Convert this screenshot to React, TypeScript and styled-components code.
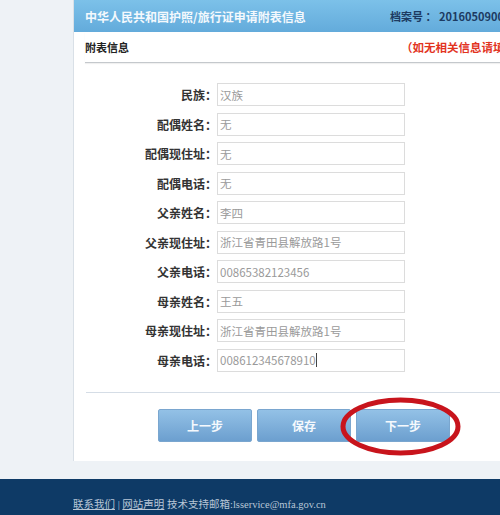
import React from 'react'
import styled, { createGlobalStyle } from 'styled-components'

const GlobalStyle = createGlobalStyle`
  html, body {
    margin: 0;
    padding: 0;
    overflow: hidden;
    background: #eef2f6;
  }
  body {
    font-family: "Noto Sans CJK SC", "Noto Sans", sans-serif;
  }
`

const fields = [
  { label: '民族', value: '汉族' },
  { label: '配偶姓名', value: '无' },
  { label: '配偶现住址', value: '无' },
  { label: '配偶电话', value: '无' },
  { label: '父亲姓名', value: '李四' },
  { label: '父亲现住址', value: '浙江省青田县解放路1号' },
  { label: '父亲电话', value: '00865382123456' },
  { label: '母亲姓名', value: '王五' },
  { label: '母亲现住址', value: '浙江省青田县解放路1号' },
  { label: '母亲电话', value: '008612345678910', caret: true }
]

export default function App() {
  return (
    <Page>
      <GlobalStyle />
      <Main>
        <Panel>
          <Header>
            <Title>中华人民共和国护照/旅行证申请附表信息</Title>
            <FileNo>档案号 ： 20160509003</FileNo>
          </Header>
          <SubHeader>
            <SubTitle>附表信息</SubTitle>
            <Hint>（如无相关信息请填"</Hint>
          </SubHeader>
          <Form>
            {fields.map((f) => (
              <Row key={f.label}>
                <Label>{f.label}：</Label>
                <Input>
                  {f.value}
                  {f.caret && <Caret />}
                </Input>
              </Row>
            ))}
          </Form>
          <Divider />
          <Buttons>
            <Button>上一步</Button>
            <Button>保存</Button>
            <Marked>
              <Button>下一步</Button>
              <Circle viewBox='0 0 121 59' width='121' height='59'>
                <ellipse
                  cx='60.5'
                  cy='29.5'
                  rx='57.5'
                  ry='26.5'
                  fill='none'
                  stroke='#c8141c'
                  strokeWidth='5'
                />
              </Circle>
            </Marked>
          </Buttons>
        </Panel>
      </Main>
      <Footer>
        <FootLink>联系我们</FootLink> | <FootLink>网站声明</FootLink> 技术支持邮箱:lsservice@mfa.gov.cn
      </Footer>
    </Page>
  )
}

const Page = styled.div`
  width: 500px;
  height: 515px;
  display: flex;
  flex-direction: column;
  background: #eef2f6;
  overflow: hidden;
`

const Main = styled.div`
  padding-left: 73px;
  height: 479px;
  flex-shrink: 0;
`

const Panel = styled.div`
  width: 440px;
  height: 461px;
  background: #ffffff;
  border-left: 1px solid #d9e0e7;
  display: flex;
  flex-direction: column;
`

const Header = styled.div`
  height: 32px;
  background: linear-gradient(#7cc1e9, #63abdb);
  display: flex;
  align-items: center;
  padding-left: 11px;
  flex-shrink: 0;
`

const Title = styled.div`
  color: #f4f9fd;
  font-size: 12px;
  font-weight: bold;
  width: 305px;
  white-space: nowrap;
`

const FileNo = styled.div`
  color: #1d3b62;
  font-size: 11px;
  font-weight: bold;
  white-space: nowrap;
`

const SubHeader = styled.div`
  height: 30px;
  margin-left: 11px;
  border-bottom: 1px solid #c4c8cc;
  box-shadow: 0 1px 1px rgba(0, 0, 0, 0.06);
  display: flex;
  align-items: center;
  flex-shrink: 0;
`

const SubTitle = styled.div`
  color: #222;
  font-size: 11px;
  font-weight: bold;
  width: 316px;
`

const Hint = styled.div`
  color: #e2341f;
  font-size: 11.5px;
  font-weight: bold;
  white-space: nowrap;
`

const Form = styled.div`
  padding-top: 20px;
  display: flex;
  flex-direction: column;
  gap: 6.5px;
`

const Row = styled.div`
  display: grid;
  grid-template-columns: 143px 188px;
  align-items: center;
`

const Label = styled.div`
  text-align: right;
  color: #333;
  font-size: 12px;
  font-weight: bold;
  white-space: nowrap;
`

const Input = styled.div`
  box-sizing: border-box;
  height: 23px;
  border: 1px solid #dcdcdc;
  padding-left: 2px;
  display: flex;
  align-items: center;
  color: #9a9a9a;
  font-size: 11.5px;
  white-space: nowrap;
`

const Caret = styled.span`
  display: inline-block;
  width: 1px;
  height: 14px;
  background: #444;
`

const Divider = styled.div`
  margin: 20px 0 0 12px;
  border-top: 1px solid #d5dde6;
`

const Buttons = styled.div`
  display: flex;
  gap: 5px;
  padding: 16px 0 0 84px;
`

const Button = styled.div`
  box-sizing: border-box;
  width: 94px;
  height: 33px;
  border-radius: 2px;
  border: 1px solid #7aa6cf;
  background: linear-gradient(#93c1e6, #6c9fcf);
  color: #f5f9fd;
  font-size: 12px;
  font-weight: bold;
  display: flex;
  align-items: center;
  justify-content: center;
`

const Marked = styled.div`
  position: relative;
`

const Circle = styled.svg`
  position: absolute;
  left: -16px;
  top: -12px;
`

const Footer = styled.div`
  flex: 1;
  background: #0e3a66;
  color: #b8c6d6;
  font-family: "Liberation Serif", "Noto Sans CJK SC", serif;
  font-size: 10.5px;
  padding: 17px 0 0 73px;
  white-space: nowrap;
`

const FootLink = styled.span`
  text-decoration: underline;
`
